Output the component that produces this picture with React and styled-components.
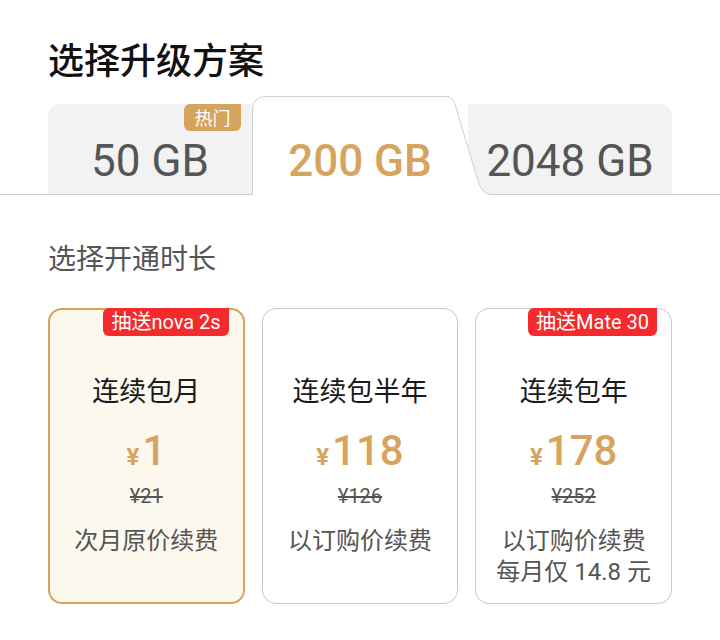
import React from "react";
import styled, { createGlobalStyle } from "styled-components";

const GlobalStyle = createGlobalStyle`
  html, body {
    margin: 0;
    padding: 0;
    background: #fff;
  }
  body {
    font-family: "Noto Sans CJK SC", "Noto Sans", sans-serif;
    color: #1a1a1a;
  }
`;

const GOLD = "#d6a45e";
const LATIN = `"Roboto", "Noto Sans CJK SC", sans-serif`;

const Page = styled.div`
  width: 720px;
  padding-top: 36px;
`;

const Title = styled.h1`
  margin: 0 48px;
  font-size: 36px;
  line-height: 44px;
  font-weight: 500;
  color: #111;
`;

const TabsWrap = styled.div`
  margin-top: 16px;
  border-bottom: 1px solid #cfcfcf;
`;

const TabStrip = styled.div`
  display: grid;
  grid-template-columns: 204px 216px 204px;
  align-items: end;
  margin: 0 48px;
  height: 98px;
`;

const Tab = styled.div`
  position: relative;
  height: 90px;
  box-sizing: border-box;
  padding-top: 35px;
  background: #f2f2f2;
  border-radius: ${({ $side }) =>
    $side === "left" ? "12px 0 0 0" : $side === "right" ? "0 12px 0 0" : "0"};
  display: flex;
  justify-content: center;
  font-family: ${LATIN};
  font-size: 44px;
  line-height: 44px;
  color: #555;
  white-space: nowrap;
`;

const ActiveTab = styled.div`
  position: relative;
  z-index: 1;
  height: 99px;
  margin-bottom: -1px;
  box-sizing: border-box;
  padding-top: 43px;
  display: flex;
  justify-content: center;
  font-family: ${LATIN};
  font-size: 44px;
  line-height: 44px;
  font-weight: 500;
  color: ${GOLD};
  white-space: nowrap;
`;

const TabShape = styled.svg`
  position: absolute;
  left: 0;
  top: 0;
  overflow: visible;
  z-index: -1;
`;

const TabLabel = styled.span`
  position: relative;
`;

const HotBadge = styled.span`
  position: absolute;
  top: 0;
  right: 11px;
  width: 57px;
  height: 27px;
  border-radius: 6px 0 6px 6px;
  background: #d4a45c;
  color: #fff;
  font-family: "Noto Sans CJK SC", sans-serif;
  font-size: 18px;
  line-height: 27px;
  text-align: center;
`;

const SubTitle = styled.h2`
  margin: 45px 48px 0;
  font-size: 28px;
  line-height: 34px;
  font-weight: 400;
  color: #555;
`;

const Cards = styled.div`
  display: grid;
  grid-template-columns: repeat(3, 1fr);
  gap: 17px;
  width: 624px;
  margin: 34px 0 0 48px;
`;

const Card = styled.div`
  position: relative;
  height: 296px;
  box-sizing: border-box;
  padding-top: ${({ $active }) => ($active ? "64px" : "65px")};
  border-radius: 14px;
  border: ${({ $active }) => ($active ? `2px solid #d4a45c` : "1px solid #c9c9c9")};
  background: ${({ $active }) => ($active ? "#fcf8ed" : "#fff")};
  display: flex;
  flex-direction: column;
  align-items: center;
  text-align: center;
`;

const GiftBadge = styled.span`
  position: absolute;
  top: ${({ $active }) => ($active ? "-2px" : "-1px")};
  right: 14px;
  height: 28px;
  padding: 0 8px;
  border-radius: 6px 0 6px 6px;
  background: #f42a2c;
  color: #fff;
  font-family: ${LATIN};
  font-size: 20px;
  line-height: 28px;
  white-space: nowrap;
`;

const PlanName = styled.div`
  font-size: 27px;
  line-height: 32px;
  color: #1a1a1a;
`;

const PriceRow = styled.div`
  margin-top: 24px;
  display: flex;
  align-items: baseline;
  justify-content: center;
  height: 42px;
  line-height: 42px;
  font-family: ${LATIN};
  color: ${GOLD};
`;

const Yen = styled.span`
  font-size: 24px;
  font-weight: 700;
  margin-right: 3px;
`;

const Amount = styled.span`
  font-size: 42px;
  font-weight: 500;
`;

const OldPrice = styled.div`
  margin-top: 13px;
  font-family: ${LATIN};
  font-size: 20px;
  line-height: 23px;
  color: #555;
  text-decoration: line-through;
`;

const Note = styled.div`
  margin-top: 18px;
  font-family: ${LATIN};
  font-size: 24px;
  line-height: 31px;
  color: #555;
  white-space: pre-line;
`;

const tabFill =
  "M0,99 L0,14 Q0,0 14,0 L194,0 Q201,0 203,8 L226,85 Q230,98.5 240,98.5 L240,99 Z";
const tabStroke =
  "M0.5,99 L0.5,14 Q0.5,0.5 14,0.5 L194,0.5 Q201,0.5 203,8 L226,85 Q230,98.5 240,98.5 L246,98.5";

const plans = [
  { name: "连续包月", price: "1", old: "¥21", note: "次月原价续费", gift: "抽送nova 2s", active: true },
  { name: "连续包半年", price: "118", old: "¥126", note: "以订购价续费" },
  { name: "连续包年", price: "178", old: "¥252", note: "以订购价续费\n每月仅 14.8 元", gift: "抽送Mate 30" },
];

export default function App() {
  return (
    <Page>
      <GlobalStyle />
      <Title>选择升级方案</Title>

      <TabsWrap>
        <TabStrip>
          <Tab $side="left">
            <HotBadge>热门</HotBadge>
            50 GB
          </Tab>
          <ActiveTab>
            <TabShape width="246" height="99" viewBox="0 0 246 99">
              <path d={tabFill} fill="#fff" />
              <path d={tabStroke} fill="none" stroke="#cfcfcf" strokeWidth="1" />
            </TabShape>
            <TabLabel>200 GB</TabLabel>
          </ActiveTab>
          <Tab $side="right">2048 GB</Tab>
        </TabStrip>
      </TabsWrap>

      <SubTitle>选择开通时长</SubTitle>

      <Cards>
        {plans.map((p) => (
          <Card key={p.name} $active={p.active}>
            {p.gift && <GiftBadge $active={p.active}>{p.gift}</GiftBadge>}
            <PlanName>{p.name}</PlanName>
            <PriceRow>
              <Yen>¥</Yen>
              <Amount>{p.price}</Amount>
            </PriceRow>
            <OldPrice>{p.old}</OldPrice>
            <Note>{p.note}</Note>
          </Card>
        ))}
      </Cards>
    </Page>
  );
}
